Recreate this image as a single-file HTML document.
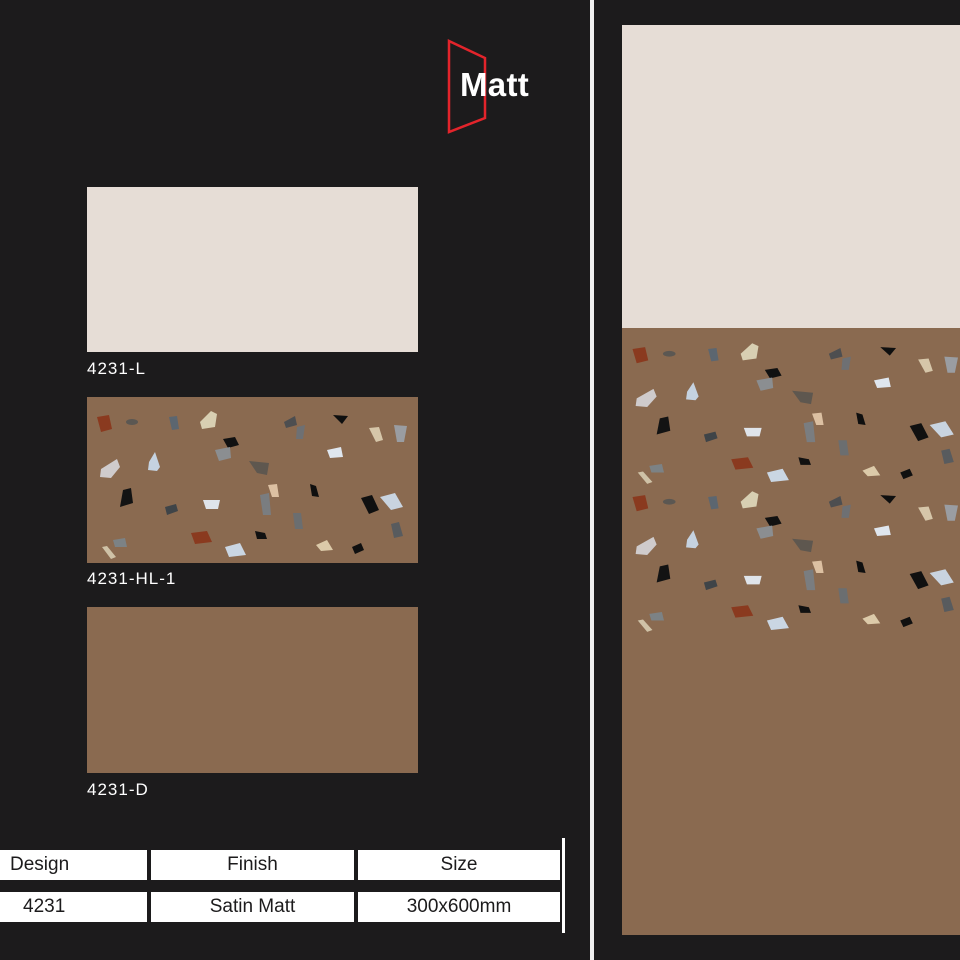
<!DOCTYPE html>
<html><head><meta charset="utf-8"><style>
html,body{margin:0;padding:0}
body{width:960px;height:960px;background:#1c1b1c;position:relative;overflow:hidden;font-family:"Liberation Sans",sans-serif}
.a{position:absolute}
.lbl{position:absolute;left:87px;color:#fff;font-size:17px;letter-spacing:1px}
.cell{position:absolute;background:#fff;color:#1c1b1c;font-size:19px;text-align:center;height:30px;line-height:30px}
</style></head><body>
<svg class="a" style="left:0;top:0" width="960" height="960" viewBox="0 0 960 960">
<defs>
<g id="chips">
<path d="M10 20 L22 18 L25 32 L14 35Z" fill="#8a3a1f"/>
<ellipse cx="45" cy="25" rx="6" ry="3" fill="#5b5752"/>
<path d="M82 20 L90 19 L92 32 L85 33Z" fill="#5c6670"/>
<path d="M113 25 L124 14 L130 17 L128 30 L115 32Z" fill="#d8cfb2"/>
<path d="M14 72 L30 62 L33 70 L24 81 L13 80Z" fill="#cfcbcc"/>
<path d="M62 65 L68 55 L73 70 L70 74 L61 73Z" fill="#c5d2e0"/>
<path d="M136 42 L148 40 L152 48 L141 51Z" fill="#111"/>
<path d="M128 53 L143 50 L144 61 L132 64Z" fill="#8b8e91"/>
<path d="M162 64 L182 66 L180 78 L170 76Z" fill="#5e574f"/>
<path d="M36 93 L44 91 L46 106 L33 110Z" fill="#131313"/>
<path d="M116 103 L133 103 L131 112 L119 112Z" fill="#dfe4ea"/>
<path d="M181 88 L190 87 L192 100 L185 100Z" fill="#dcc0a2"/>
<path d="M173 98 L182 96 L184 118 L176 118Z" fill="#7a7d80"/>
<path d="M78 110 L89 107 L91 114 L80 118Z" fill="#3f4448"/>
<path d="M223 87 L229 89 L232 100 L225 99Z" fill="#0f0f0f"/>
<path d="M274 101 L285 98 L292 113 L282 117Z" fill="#101010"/>
<path d="M293 100 L308 96 L316 110 L304 113Z" fill="#c9d4e0"/>
<path d="M104 136 L120 134 L125 145 L108 147Z" fill="#8a3a1f"/>
<path d="M168 134 L178 136 L180 142 L170 142Z" fill="#111"/>
<path d="M138 150 L153 146 L159 158 L142 160Z" fill="#cad6e3"/>
<path d="M229 148 L240 143 L246 153 L234 154Z" fill="#dccaa9"/>
<path d="M265 150 L274 146 L277 153 L268 157Z" fill="#101010"/>
<path d="M304 127 L312 125 L316 139 L307 141Z" fill="#585b5e"/>
<path d="M26 143 L38 141 L40 150 L28 150Z" fill="#7c8285"/>
<path d="M15 150 L20 149 L29 160 L24 162Z" fill="#cfc2a7"/>
<path d="M206 116 L214 116 L216 132 L208 132Z" fill="#6b6e70"/>
<path d="M197 25 L208 19 L210 28 L199 31Z" fill="#4d4e50"/>
<path d="M246 18 L261 19 L255 27Z" fill="#0f0f0f"/>
<path d="M282 31 L292 30 L296 43 L289 45Z" fill="#d6c6a9"/>
<path d="M307 28 L320 29 L317 45 L310 45Z" fill="#9a9da2"/>
<path d="M240 53 L254 50 L256 60 L243 61Z" fill="#dfe6ee"/>
<path d="M210 30 L218 28 L216 42 L209 42Z" fill="#6e7073"/>
</g>
</defs>
<rect x="87" y="187" width="331" height="165" fill="#e6ddd6"/>
<rect x="87" y="397" width="331" height="166" fill="#8a6a50"/>
<use href="#chips" x="87" y="397"/>
<rect x="87" y="607" width="331" height="166" fill="#8a6a50"/>
<rect x="590" y="0" width="4" height="960" fill="#f0f0f0"/>
<rect x="622" y="25" width="338" height="303" fill="#e6ddd6"/>
<rect x="622" y="328" width="338" height="607" fill="#8a6a50"/>
<g transform="translate(622,330) scale(1.05,0.95)"><use href="#chips"/></g>
<g transform="translate(622,478) scale(1.05,0.95)"><use href="#chips"/></g>
<path d="M449 41 L485 58 L485 118 L449 132Z" fill="none" stroke="#e3242b" stroke-width="2.5"/>
<rect x="562" y="838" width="3" height="95" fill="#fff"/>
</svg>
<div class="a" style="left:460px;top:66px;color:#fff;font-size:33px;font-weight:bold;letter-spacing:0.3px">Matt</div>
<div class="lbl" style="top:359px">4231-L</div>
<div class="lbl" style="top:569px">4231-HL-1</div>
<div class="lbl" style="top:780px">4231-D</div>
<div class="cell" style="left:0;top:850px;width:147px;text-align:left;padding-left:10px;box-sizing:border-box">Design</div>
<div class="cell" style="left:151px;top:850px;width:203px">Finish</div>
<div class="cell" style="left:358px;top:850px;width:202px">Size</div>
<div class="cell" style="left:0;top:892px;width:147px;text-align:left;padding-left:23px;box-sizing:border-box">4231</div>
<div class="cell" style="left:151px;top:892px;width:203px">Satin Matt</div>
<div class="cell" style="left:358px;top:892px;width:202px">300x600mm</div>
</body></html>
